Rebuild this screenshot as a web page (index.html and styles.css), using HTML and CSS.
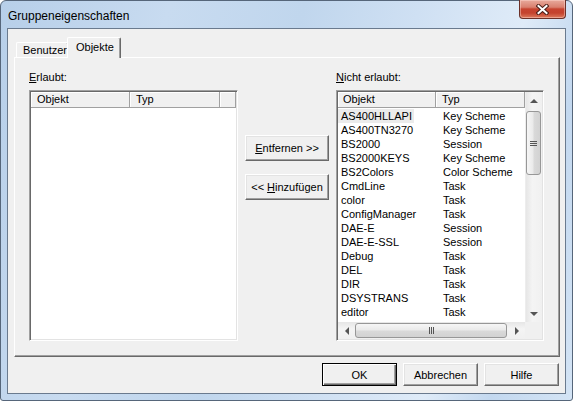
FILE: index.html
```html
<!DOCTYPE html>
<html lang="de">
<head>
    <meta charset="UTF-8">
    <title>Gruppeneigenschaften</title>
    <link rel="stylesheet" href="styles.css">
</head>
<body>
    <div class="window">
        <div class="titlebar">
            <span class="title">Gruppeneigenschaften</span>
            <button class="close-btn" aria-label="Schließen">
                <svg width="13" height="11" viewBox="0 0 13 11">
                    <path d="M2.5 2 L10.5 9 M10.5 2 L2.5 9" stroke="#4a1e18" stroke-width="4" stroke-linecap="square"/>
                    <path d="M2.5 2 L10.5 9 M10.5 2 L2.5 9" stroke="#fff" stroke-width="2" stroke-linecap="square"/>
                </svg>
            </button>
        </div>

        <div class="client">
            <div class="tabs">
                <div class="tab">Benutzer</div>
                <div class="tab active">Objekte</div>
            </div>

            <div class="tab-panel">
                <div class="lists">
                    <div class="label"><u>E</u>rlaubt:</div>
                    <div></div>
                    <div class="label"><u>N</u>icht erlaubt:</div>

                    <!-- linke Liste (leer) -->
                    <div class="listview">
                        <div class="lv-header">
                            <div class="hd col-obj">Objekt</div>
                            <div class="hd col-typ">Typ</div>
                            <div class="hd col-fill"></div>
                        </div>
                    </div>

                    <div class="move-btns">
                        <button class="btn"><u>E</u>ntfernen &gt;&gt;</button>
                        <button class="btn">&lt;&lt; <u>H</u>inzufügen</button>
                    </div>

                    <!-- rechte Liste mit Scrollbars -->
                    <div class="listview">
                        <div class="lv-main">
                            <div class="lv-content">
                                <div class="lv-header">
                                    <div class="hd col-obj-r">Objekt</div>
                                    <div class="hd col-typ-r">Typ</div>
                                </div>
                                <div class="lv-rows">
                                    <div class="row"><div class="c-obj"><span class="sel">AS400HLLAPI</span></div><div class="c-typ">Key Scheme</div></div>
                                    <div class="row"><div class="c-obj"><span>AS400TN3270</span></div><div class="c-typ">Key Scheme</div></div>
                                    <div class="row"><div class="c-obj"><span>BS2000</span></div><div class="c-typ">Session</div></div>
                                    <div class="row"><div class="c-obj"><span>BS2000KEYS</span></div><div class="c-typ">Key Scheme</div></div>
                                    <div class="row"><div class="c-obj"><span>BS2Colors</span></div><div class="c-typ">Color Scheme</div></div>
                                    <div class="row"><div class="c-obj"><span>CmdLine</span></div><div class="c-typ">Task</div></div>
                                    <div class="row"><div class="c-obj"><span>color</span></div><div class="c-typ">Task</div></div>
                                    <div class="row"><div class="c-obj"><span>ConfigManager</span></div><div class="c-typ">Task</div></div>
                                    <div class="row"><div class="c-obj"><span>DAE-E</span></div><div class="c-typ">Session</div></div>
                                    <div class="row"><div class="c-obj"><span>DAE-E-SSL</span></div><div class="c-typ">Session</div></div>
                                    <div class="row"><div class="c-obj"><span>Debug</span></div><div class="c-typ">Task</div></div>
                                    <div class="row"><div class="c-obj"><span>DEL</span></div><div class="c-typ">Task</div></div>
                                    <div class="row"><div class="c-obj"><span>DIR</span></div><div class="c-typ">Task</div></div>
                                    <div class="row"><div class="c-obj"><span>DSYSTRANS</span></div><div class="c-typ">Task</div></div>
                                    <div class="row"><div class="c-obj"><span>editor</span></div><div class="c-typ">Task</div></div>
                                    <div class="row"><div class="c-obj"><span>ftp</span></div><div class="c-typ">Task</div></div>
                                </div>
                            </div>
                            <div class="vscroll">
                                <div class="sb-btn"><span class="arr arr-up"></span></div>
                                <div class="sb-track v">
                                    <div class="thumb v"><span class="grip v"></span></div>
                                </div>
                                <div class="sb-btn"><span class="arr arr-down"></span></div>
                            </div>
                        </div>
                        <div class="hscroll-row">
                            <div class="hscroll">
                                <div class="sb-btn"><span class="arr arr-left"></span></div>
                                <div class="sb-track h">
                                    <div class="thumb h"><span class="grip h"></span></div>
                                </div>
                                <div class="sb-btn"><span class="arr arr-right"></span></div>
                            </div>
                            <div class="sb-corner"></div>
                        </div>
                    </div>
                </div>
            </div>

            <div class="dialog-btns">
                <button class="btn default">OK</button>
                <button class="btn">Abbrechen</button>
                <button class="btn">Hilfe</button>
            </div>
        </div>
    </div>
</body>
</html>
```

FILE: styles.css
```css
* {
    box-sizing: border-box;
}
body {
    margin: 0;
    font-family: "Liberation Sans", Arial, sans-serif;
    font-size: 11px;
    color: #000;
    background: #fff;
}
u {
    text-decoration: underline;
    text-underline-offset: 1px;
}

/* Fensterrahmen (Aero) */
.window {
    width: 573px;
    height: 401px;
    border: 1px solid #56667a;
    border-radius: 6px 6px 3px 3px;
    padding: 0 6px 6px 6px;
    background: linear-gradient(105deg, #b7cfe9 0%, #c8dbf0 25%, #c0d6ed 45%, #cfe0f3 62%, #dfebf8 78%, #c3d8ef 88%, #d4e4f5 100%);
    display: flex;
    flex-direction: column;
}
.titlebar {
    height: 27px;
    display: flex;
    justify-content: space-between;
    align-items: flex-start;
    padding-left: 1px;
}
.title {
    font-size: 12px;
    line-height: 14px;
    padding-top: 8px;
}
.close-btn {
    width: 47px;
    height: 19px;
    margin-top: -1px;
    padding: 0;
    border: 1px solid #6b3028;
    border-top: none;
    border-radius: 0 0 4px 4px;
    background: linear-gradient(#e8aa9c 0%, #d9806f 40%, #c6432f 50%, #c4422d 72%, #dd7a5d 100%);
    box-shadow: inset 0 0 0 1px rgba(255, 220, 210, 0.45);
    display: flex;
    align-items: center;
    justify-content: center;
}

/* Client-Bereich */
.client {
    flex: 1;
    border: 1px solid #6a7a8e;
    background: #f0f0f0;
    padding: 8px 0 0 6px;
    display: flex;
    flex-direction: column;
}

/* Registerkarten */
.tabs {
    display: flex;
    align-items: flex-end;
    height: 20px;
    padding-left: 2px;
    position: relative;
    z-index: 2;
}
.tab {
    width: 53px;
    height: 15px;
    padding-left: 6px;
    line-height: 14px;
    background: #f0f0f0;
    border-top: 1px solid #fff;
    border-left: 1px solid #fff;
    border-right: 1px solid #696969;
    box-shadow: inset -1px 0 #a0a0a0;
    border-radius: 2px 2px 0 0;
}
.tab.active {
    width: 54px;
    height: 21px;
    margin-left: -2px;
    margin-bottom: -1px;
    padding: 2px 0 0 8px;
}

.tab-panel {
    width: 546px;
    height: 300px;
    background: #f0f0f0;
    border-top: 1px solid #fff;
    border-left: 1px solid #fff;
    border-right: 1px solid #696969;
    border-bottom: 1px solid #696969;
    box-shadow: inset -1px -1px #a0a0a0;
    padding: 13px 0 0 14px;
}
.lists {
    display: grid;
    grid-template-columns: 209px 84px 208px;
    grid-template-rows: 19px 251px;
    column-gap: 7px;
}
.label {
    line-height: 13px;
}

/* Listenansicht */
.listview {
    border: 1px solid;
    border-color: #a0a0a0 #fff #fff #a0a0a0;
    box-shadow: inset 1px 1px #696969, inset -1px -1px #e3e3e3;
    background: #fff;
    padding: 1px;
    display: flex;
    flex-direction: column;
    overflow: hidden;
}
.lv-header {
    display: flex;
    height: 16px;
    flex-shrink: 0;
}
.hd {
    background: #f0f0f0;
    border-right: 1px solid #a0a0a0;
    border-bottom: 1px solid #a0a0a0;
    box-shadow: inset 1px 1px #fff;
    line-height: 15px;
    padding-left: 6px;
    white-space: nowrap;
}
.col-obj { width: 99px; }
.col-typ { width: 90px; }
.col-fill { flex: 1; }
.col-obj-r { width: 98px; padding-left: 5px; }
.col-typ-r { flex: 1; }

.lv-main {
    display: flex;
    flex: 1;
    min-height: 0;
}
.lv-content {
    flex: 1;
    display: flex;
    flex-direction: column;
    overflow: hidden;
}
.lv-rows {
    padding-top: 1px;
    overflow: hidden;
}
.row {
    display: flex;
    height: 14px;
    line-height: 14px;
    white-space: nowrap;
}
.c-obj {
    width: 98px;
}
.c-obj span {
    display: inline-block;
    padding: 0 2px 0 3px;
}
.c-obj .sel {
    background: #ebebeb;
}
.c-typ {
    padding-left: 7px;
}

/* Scrollbalken */
.vscroll {
    width: 17px;
    display: flex;
    flex-direction: column;
    background: linear-gradient(to right, #e6e6e6, #f4f4f4 40%, #f0f0f0);
    border-left: 1px solid #ededed;
}
.hscroll-row {
    display: flex;
    height: 17px;
    flex-shrink: 0;
}
.hscroll {
    flex: 1;
    display: flex;
    background: linear-gradient(#e6e6e6, #f4f4f4 40%, #f0f0f0);
}
.sb-corner {
    width: 17px;
    background: #f0f0f0;
}
.sb-btn {
    width: 17px;
    height: 17px;
    flex-shrink: 0;
    display: flex;
    align-items: center;
    justify-content: center;
}
.vscroll .sb-btn { width: 16px; }
.sb-track {
    flex: 1;
    display: flex;
}
.sb-track.v {
    flex-direction: column;
    padding-top: 2px;
}
.thumb {
    border: 1px solid #979797;
    border-radius: 3px;
    display: flex;
    align-items: center;
    justify-content: center;
}
.thumb.v {
    height: 64px;
    margin-right: 1px;
    background: linear-gradient(to right, #f6f6f6, #eaeaea 45%, #d9d9d9 55%, #d2d2d2);
}
.thumb.h {
    width: 152px;
    margin-top: 1px;
    height: 15px;
    background: linear-gradient(#f6f6f6, #eaeaea 45%, #d9d9d9 55%, #d2d2d2);
}
/* drei Griffrillen */
.grip.v {
    width: 7px;
    height: 5px;
    background: repeating-linear-gradient(#555 0 1px, transparent 1px 2px);
}
.grip.h {
    width: 5px;
    height: 7px;
    background: repeating-linear-gradient(to right, #555 0 1px, transparent 1px 2px);
}
.arr {
    width: 0;
    height: 0;
    border-style: solid;
    border-color: transparent;
}
.arr-up {
    border-width: 0 4px 4px 4px;
    border-bottom-color: #555;
}
.arr-down {
    border-width: 4px 4px 0 4px;
    border-top-color: #555;
}
.arr-left {
    border-width: 4px 4px 4px 0;
    border-right-color: #555;
}
.arr-right {
    border-width: 4px 0 4px 4px;
    border-left-color: #555;
}

/* Schaltflächen */
.move-btns {
    display: flex;
    flex-direction: column;
    gap: 13px;
    padding-top: 45px;
}
.btn {
    font-family: inherit;
    font-size: 11px;
    color: #000;
    background: #f0f0f0;
    border: 1px solid;
    border-color: #fff #696969 #696969 #fff;
    box-shadow: inset -1px -1px #a0a0a0, inset 1px 1px #e3e3e3;
    padding: 0;
    height: 26px;
}
.dialog-btns {
    display: flex;
    justify-content: flex-end;
    gap: 6px;
    padding: 6px 6px 0 0;
}
.dialog-btns .btn {
    width: 75px;
    height: 23px;
}
.btn.default {
    border-color: #000;
    box-shadow: inset 1px 1px #fff, inset -1px -1px #696969, inset -2px -2px #a0a0a0;
}
```
